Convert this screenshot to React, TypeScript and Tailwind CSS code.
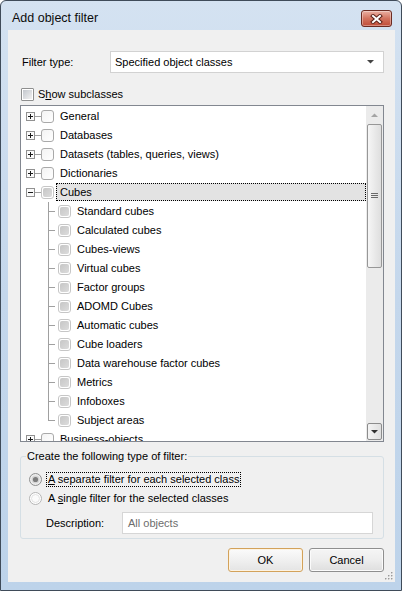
import type { ReactNode } from "react";

const topItems = ["General", "Databases", "Datasets (tables, queries, views)", "Dictionaries"];

const cubeItems = [
  "Standard cubes",
  "Calculated cubes",
  "Cubes-views",
  "Virtual cubes",
  "Factor groups",
  "ADOMD Cubes",
  "Automatic cubes",
  "Cube loaders",
  "Data warehouse factor cubes",
  "Metrics",
  "Infoboxes",
  "Subject areas",
];

function CloseButton() {
  return (
    <div className="mt-[9px] flex h-[17px] w-[31px] items-center justify-center rounded-[3px] border border-[#6b2b22] bg-gradient-to-b from-[#eab0a3] via-[#d2735f] to-[#c04b37] shadow-[inset_0_0_0_1px_rgba(255,255,255,0.35)]">
      <svg width="13" height="10" viewBox="0 0 13 10">
        <path d="M3 2l7 6M10 2l-7 6" stroke="#5a2119" strokeWidth="4" strokeLinecap="square" />
        <path d="M3 2l7 6M10 2l-7 6" stroke="#ffffff" strokeWidth="2" strokeLinecap="square" />
      </svg>
    </div>
  );
}

function Expander({ open }: { open?: boolean }) {
  return (
    <svg width="9" height="9" viewBox="0 0 9 9" className="shrink-0">
      <rect x="0.5" y="0.5" width="8" height="8" fill="#fafafa" stroke="#919191" />
      <path d="M2 4.5h5" stroke="#1a1a1a" />
      {!open && <path d="M4.5 2v5" stroke="#1a1a1a" />}
    </svg>
  );
}

function TreeCheck() {
  return (
    <span className="h-[13px] w-[13px] shrink-0 rounded-[3px] border border-[#a9a9a9] bg-gradient-to-br from-[#f3f3f3] to-white" />
  );
}

function GrayCheck() {
  return (
    <span className="flex h-[13px] w-[13px] shrink-0 items-center justify-center rounded-[3px] border border-[#c6c6c6] bg-white">
      <span className="h-[9px] w-[9px] rounded-[2px] bg-gradient-to-br from-[#c6c6c6] to-[#dcdcdc]" />
    </span>
  );
}

function WinCheck() {
  return (
    <span className="flex h-[13px] w-[13px] shrink-0 items-center justify-center rounded-[1px] border border-[#8e8f8f] bg-white">
      <span className="h-[9px] w-[9px] bg-gradient-to-br from-[#c3c7cd] to-[#f2f2f2]" />
    </span>
  );
}

function Radio({ checked }: { checked?: boolean }) {
  return (
    <svg width="13" height="13" viewBox="0 0 13 13" className="shrink-0">
      {checked ? (
        <>
          <circle cx="6.5" cy="6.5" r="6" fill="#eeeeee" stroke="#8e8f8f" />
          <circle cx="6.5" cy="6.5" r="4" fill="#d5d5d5" />
          <circle cx="6.5" cy="6.5" r="2.6" fill="#7d7d7d" />
        </>
      ) : (
        <>
          <circle cx="6.5" cy="6.5" r="6" fill="#ffffff" stroke="#b4b4b4" />
          <circle cx="6.5" cy="6.5" r="4" fill="#fbfbfb" stroke="#e2e2e2" />
        </>
      )}
    </svg>
  );
}

function TopRow({ children }: { children: ReactNode }) {
  return (
    <div className="flex h-[19px] items-center">
      <span className="ml-[5px]">
        <Expander />
      </span>
      <span className="h-px w-[6px] bg-[#a0a0a0]" />
      <TreeCheck />
      <span className="ml-[6px] whitespace-nowrap">{children}</span>
    </div>
  );
}

function ChildRow({ label, last }: { label: string; last?: boolean }) {
  return (
    <div className="flex h-[19px] items-center">
      <span className="w-[27px] shrink-0" />
      <svg width="10" height="19" viewBox="0 0 10 19" className="shrink-0">
        <path d={last ? "M0.5 0v10" : "M0.5 0v19"} stroke="#a0a0a0" />
        <path d="M0 9.5h7" stroke="#a0a0a0" />
      </svg>
      <GrayCheck />
      <span className="ml-[6px] whitespace-nowrap">{label}</span>
    </div>
  );
}

function ScrollBar() {
  return (
    <div className="flex w-[17px] shrink-0 flex-col bg-[#ebebeb]">
      <div className="flex h-[18px] items-center justify-center">
        <svg width="7" height="4" viewBox="0 0 7 4">
          <path d="M0 4h7L3.5 0.5z" fill="#a4a4a4" />
        </svg>
      </div>
      <div className="mx-px flex h-[144px] items-center justify-center rounded-[2px] border border-[#979797] bg-gradient-to-r from-[#f6f6f6] to-[#dedede]">
        <svg width="7" height="6" viewBox="0 0 7 6">
          <path d="M0 0.5h7M0 2.5h7M0 4.5h7" stroke="#6a6a6a" />
        </svg>
      </div>
      <div className="flex-1" />
      <div className="mx-px mb-px flex h-[17px] items-center justify-center rounded-[2px] border border-[#8c8c8c] bg-gradient-to-r from-[#f4f4f4] to-[#dfdfdf]">
        <svg width="7" height="4" viewBox="0 0 7 4">
          <path d="M0 0h7L3.5 3.5z" fill="#303030" />
        </svg>
      </div>
    </div>
  );
}

export default function App() {
  return (
    <div className="bg-white">
      <div className="flex h-[591px] w-[402px] flex-col rounded-t-[6px] border border-[#3f4b59] bg-gradient-to-b from-[#d4e2f1] via-[#c4d7ec] to-[#bdd3ea] font-['Liberation_Sans',Arial,sans-serif] text-[11px] text-black">
        {/* title bar */}
        <div className="flex h-[29px] items-start justify-between pl-[11px] pr-[9px]">
          <span className="pt-[10px] text-[12.5px] leading-[15px] text-[#0c0c0c]">Add object filter</span>
          <CloseButton />
        </div>

        {/* client area */}
        <div className="relative ml-[7px] mr-[6px] h-[552px] bg-[#f0f0f0] pl-[12px]">
          <div className="flex w-[364px] flex-col">
            <div className="mt-[21px] flex h-[22px] items-center">
              <span className="ml-[2px] w-[88px]">Filter type:</span>
              <div className="flex h-[22px] flex-1 items-center justify-between border border-[#d2d2d2] bg-white pl-[4px] pr-[9px]">
                <span>Specified object classes</span>
                <svg width="7" height="4" viewBox="0 0 7 4">
                  <path d="M0 0h7L3.5 3.5z" fill="#444444" />
                </svg>
              </div>
            </div>

            <div className="mt-[15px] flex h-[13px] items-center">
              <span className="ml-px">
                <WinCheck />
              </span>
              <span className="ml-[4px]">
                S<span className="underline">h</span>ow subclasses
              </span>
            </div>

            {/* tree */}
            <div className="mt-[4px] flex h-[337px] overflow-hidden border border-[#828790] bg-white">
              <div className="flex-1 overflow-hidden pt-px">
                {topItems.map((t) => (
                  <TopRow key={t}>{t}</TopRow>
                ))}
                <div className="flex h-[19px] items-start">
                  <span className="ml-[5px] mt-[5px]">
                    <Expander open />
                  </span>
                  <span className="mt-[9px] h-px w-[6px] bg-[#a0a0a0]" />
                  <span className="mt-[3px]">
                    <GrayCheck />
                  </span>
                  <span className="ml-[2px] flex h-[18px] flex-1 items-center border border-dotted border-black bg-[#e3e3e3] pl-[3px]">
                    Cubes
                  </span>
                </div>
                {cubeItems.map((c, i) => (
                  <ChildRow key={c} label={c} last={i === cubeItems.length - 1} />
                ))}
                <TopRow>Business-objects</TopRow>
              </div>
              <ScrollBar />
            </div>

            {/* group box */}
            <fieldset className="mt-[8px] rounded-[3px] border border-[#d5dfe5] pb-[4px] pl-[8px] pr-[10px]">
              <legend className="-ml-[3px] px-px leading-[13px]">Create the following type of filter:</legend>
              <div className="mt-[7px] flex h-[19px] items-center">
                <Radio checked />
                <span className="ml-[4px] border border-dotted border-black px-[1px] leading-[13px]">
                  <span className="underline">A</span> separate filter for each selected class
                </span>
              </div>
              <div className="flex h-[19px] items-center">
                <Radio />
                <span className="ml-[6px]">
                  A <span className="underline">s</span>ingle filter for the selected classes
                </span>
              </div>
              <div className="mt-[4px] flex h-[22px] items-center">
                <span className="ml-[17px] w-[76px]">Description:</span>
                <div className="flex h-[22px] flex-1 items-center border border-[#d6d6d6] bg-white pl-[5px] text-[#6d6d6d]">
                  All objects
                </div>
              </div>
            </fieldset>

            {/* buttons */}
            <div className="mt-[9px] flex justify-end gap-[6px]">
              <button className="flex h-[24px] w-[75px] items-center justify-center rounded-[3px] border border-[#d3a25a] bg-gradient-to-b from-[#fbfbfb] via-[#f0f0f0] to-[#e4e4e4] shadow-[inset_0_0_0_1px_#fdf3e2]">
                OK
              </button>
              <button className="flex h-[24px] w-[75px] items-center justify-center rounded-[3px] border border-[#8f8f8f] bg-gradient-to-b from-[#f5f5f5] via-[#ededed] to-[#dedede] shadow-[inset_0_0_0_1px_#fbfbfb]">
                Cancel
              </button>
            </div>
          </div>

          {/* size grip */}
          <svg width="9" height="9" viewBox="0 0 9 9" className="absolute bottom-[2px] right-[2px]">
            {[
              [7, 1],
              [4, 4],
              [7, 4],
              [1, 7],
              [4, 7],
              [7, 7],
            ].map(([x, y]) => (
              <g key={`${x}-${y}`}>
                <rect x={x + 0.5} y={y + 0.5} width="1.5" height="1.5" fill="#ffffff" />
                <rect x={x} y={y} width="1.5" height="1.5" fill="#9a9a9a" />
              </g>
            ))}
          </svg>
        </div>
      </div>
    </div>
  );
}
